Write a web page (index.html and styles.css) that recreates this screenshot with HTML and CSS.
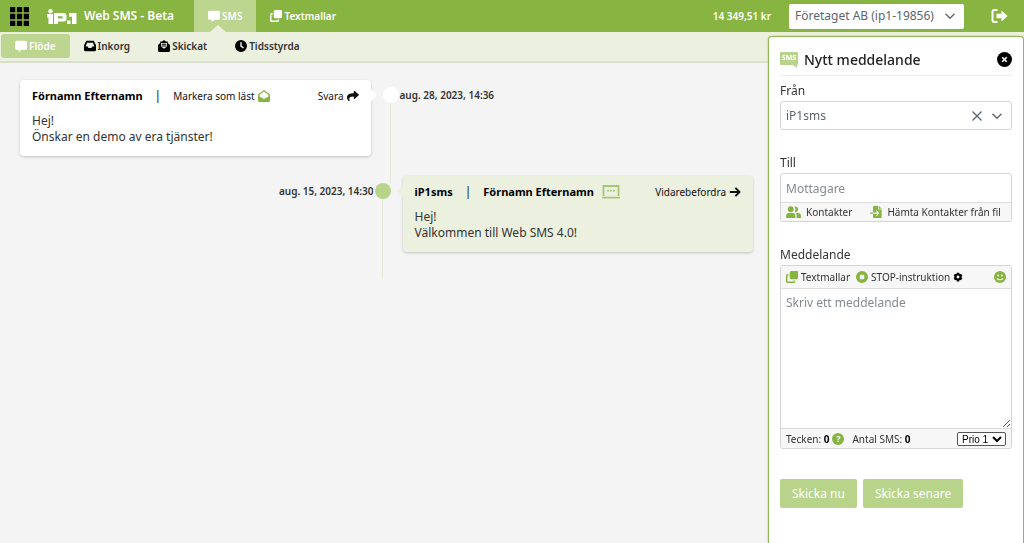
FILE: index.html
```html
<!DOCTYPE html>
<html lang="sv">
<head>
    <meta charset="UTF-8">
    <meta name="viewport" content="width=device-width, initial-scale=1.0">
    <title>Web SMS - Beta</title>
    <link rel="stylesheet" href="styles.css">
</head>
<body>
    <!-- shared icons -->
    <svg class="sprite" aria-hidden="true">
        <symbol id="i-comment" viewBox="0 0 16 16"><path d="M2 1h12a2 2 0 0 1 2 2v8a2 2 0 0 1-2 2H9l-4 3v-3H2a2 2 0 0 1-2-2V3a2 2 0 0 1 2-2z"/></symbol>
        <symbol id="i-clone" viewBox="0 0 16 16"><path d="M7 0h7.500A1.500 1.500 0 0 1 16 1.500V9a2 2 0 0 1-2 2H7a2 2 0 0 1-2-2V2a2 2 0 0 1 2-2z"/><path d="M3.500 5H2.500A1.500 1.500 0 0 0 1 6.500v7A1.500 1.500 0 0 0 2.500 15h7a1.500 1.500 0 0 0 1.500-1.500v-1" fill="none" stroke="currentColor" stroke-width="2"/></symbol>
        <symbol id="i-inbox" viewBox="0 0 16 16"><path fill-rule="evenodd" d="M3 1h10l3 6v6a2 2 0 0 1-2 2H2a2 2 0 0 1-2-2V7zM4 3.500L2.200 8.500H5l1 2h4l1-2h2.800L12 3.500z"/></symbol>
        <symbol id="i-sent" viewBox="0 0 16 16"><path fill-rule="evenodd" d="M8 0l2.500 2H13v2l3 2.500V14a2 2 0 0 1-2 2H2a2 2 0 0 1-2-2V6.500L3 4V2h2.500zM4 4v4.500l4 3 4-3V4zM5 5h6v1.200H5zM5 7.300h6v1.200H5z"/></symbol>
        <symbol id="i-clock" viewBox="0 0 16 16"><path fill-rule="evenodd" d="M8 0a8 8 0 1 1 0 16A8 8 0 0 1 8 0zM7 3v5.600l3.700 2.700 1.200-1.600L9 7.600V3z"/></symbol>
        <symbol id="i-open" viewBox="0 0 16 16"><path fill-rule="evenodd" d="M8 0l7.200 5.200a2 2 0 0 1 .8 1.600V14a2 2 0 0 1-2 2H2a2 2 0 0 1-2-2V6.800a2 2 0 0 1 .8-1.600zM8 2L2 6.500v2L8 12l6-3.500v-2z"/></symbol>
        <symbol id="i-share" viewBox="0 0 512 512"><path d="M503.691 189.836L327.687 37.851C312.281 24.546 288 35.347 288 56.015v80.053C127.371 137.907 0 170.100 0 322.326c0 61.441 39.581 122.309 83.333 154.132 13.653 9.931 33.111-2.533 28.077-18.631C66.066 312.814 132.917 274.316 288 272.085V360c0 20.700 24.300 31.453 39.687 18.164l176.004-152c11.071-9.562 11.086-26.753 0-36.328z"/></symbol>
        <symbol id="i-arrow" viewBox="0 0 16 16"><path d="M1 8h13M8.500 2.500L14 8l-5.500 5.500" fill="none" stroke="currentColor" stroke-width="2.600"/></symbol>
        <symbol id="i-chevron" viewBox="0 0 16 16"><path d="M2 5l6 6 6-6" fill="none" stroke="currentColor" stroke-width="1.800"/></symbol>
        <symbol id="i-cross" viewBox="0 0 16 16"><path d="M2 2l12 12M14 2L2 14" fill="none" stroke="currentColor" stroke-width="1.800"/></symbol>
        <symbol id="i-close" viewBox="0 0 16 16"><circle cx="8" cy="8" r="8"/><path d="M5.600 5.600l4.800 4.800M10.400 5.600l-4.800 4.800" stroke="#fff" stroke-width="1.800"/></symbol>
        <symbol id="i-laptop" viewBox="0 0 18 14"><path d="M1.500 11V1h15v10M0 12.700h18" fill="none" stroke="currentColor" stroke-width="1.800"/><path d="M5 5h2v1.500H5zM8 5h2v1.500H8zM11 5h2v1.500h-2z"/></symbol>
        <symbol id="i-users" viewBox="0 0 16 13"><circle cx="5" cy="3.500" r="3.200"/><path d="M0 13v-2.500a3 3 0 0 1 3-3h4a3 3 0 0 1 3 3V13z"/><path d="M9 .7a3 3 0 1 1 0 5.600 4.500 4.500 0 0 0 0-5.600zM10.500 7.500H13a3 3 0 0 1 3 3V13h-4.700v-2.500a4 4 0 0 0-.8-3z"/></symbol>
        <symbol id="i-import" viewBox="0 0 16 16"><path d="M5 0h6v4.500h4.500V15a1 1 0 0 1-1 1H5a1 1 0 0 1-1-1V1a1 1 0 0 1 1-1zM12 0l3.500 3.500H12z"/><path d="M4 9.500h7M8.500 6l3 3.500-3 3.500" fill="none" stroke="#f7f7f7" stroke-width="1.500"/><path d="M0 8.700h4v1.600H0z"/></symbol>
        <symbol id="i-stop" viewBox="0 0 16 16"><path fill-rule="evenodd" d="M8 0a8 8 0 1 1 0 16A8 8 0 0 1 8 0zM6 5a1 1 0 0 0-1 1v4a1 1 0 0 0 1 1h4a1 1 0 0 0 1-1V6a1 1 0 0 0-1-1z"/></symbol>
        <symbol id="i-gear" viewBox="0 0 16 16"><path d="M8 4.600V1M8 11.400V15M5 6.300L2 4.500M11 9.700l3 1.800M5 9.700l-3 1.800M11 6.300l3-1.800" stroke="currentColor" stroke-width="4"/><circle cx="8" cy="8" r="4" fill="none" stroke="currentColor" stroke-width="3.400"/></symbol>
        <symbol id="i-smile" viewBox="0 0 16 16"><circle cx="8" cy="8" r="8"/><circle cx="5.300" cy="6" r="1.200" fill="#fff"/><circle cx="10.700" cy="6" r="1.200" fill="#fff"/><path d="M4 9.800c2 2.600 6 2.600 8 0" fill="none" stroke="#fff" stroke-width="1.400"/></symbol>
    </svg>

    <header class="topbar">
        <button class="icon-button apps" type="button" aria-label="Appar">
            <svg class="apps-icon" viewBox="0 0 18 18">
                <path d="M0 0h5v5H0zM6.500 0h5v5h-5zM13 0h5v5h-5zM0 6.500h5v5H0zM6.500 6.500h5v5h-5zM13 6.500h5v5h-5zM0 13h5v5H0zM6.500 13h5v5h-5zM13 13h5v5h-5z"/>
            </svg>
        </button>
        <a class="brand" href="#">
            <svg class="logo" viewBox="0 0 30 15" aria-label="iP.1">
                <circle cx="3.500" cy="2.200" r="2.200"/>
                <path d="M0 5h6v10H1.500V8.500H0z"/>
                <path fill-rule="evenodd" d="M7 4h9.500a3 3 0 0 1 3 3v2.500a3 3 0 0 1-3 3H11V15H7zM11 7.300v2.200h4.500V7.300z"/>
                <path d="M20 11.500h3.500V15H20zM22 4h7.500v11h-4.500V7.700h-3z"/>
            </svg>
            <span>Web SMS - Beta</span>
        </a>
        <nav class="tabs">
            <a class="tab active" href="#"><svg class="icon"><use href="#i-comment"/></svg>SMS</a>
            <a class="tab" href="#"><svg class="icon"><use href="#i-clone"/></svg>Textmallar</a>
        </nav>
        <span class="balance">14 349,51 kr</span>
        <div class="account">
            <select aria-label="Konto"><option>Företaget AB (ip1-19856)</option></select>
            <svg class="icon chevron"><use href="#i-chevron"/></svg>
        </div>
        <button class="icon-button logout" type="button" aria-label="Logga ut">
            <svg class="logout-icon" viewBox="0 0 16 14">
                <path d="M6 1H3a2 2 0 0 0-2 2v8a2 2 0 0 0 2 2h3" fill="none" stroke="currentColor" stroke-width="2"/>
                <path d="M10 1.500L16 7l-6 5.500V9.200H5V4.800h5z"/>
            </svg>
        </button>
    </header>

    <nav class="subnav">
        <a class="sub active" href="#"><svg class="icon"><use href="#i-comment"/></svg>Flöde</a>
        <a class="sub" href="#"><svg class="icon"><use href="#i-inbox"/></svg>Inkorg</a>
        <a class="sub" href="#"><svg class="icon"><use href="#i-sent"/></svg>Skickat</a>
        <a class="sub" href="#"><svg class="icon"><use href="#i-clock"/></svg>Tidsstyrda</a>
    </nav>

    <main class="timeline">
        <article class="entry incoming">
            <div class="card">
                <div class="card-head">
                    <strong>Förnamn Efternamn</strong>
                    <span>|</span>
                    <button class="text-button" type="button">Markera som läst <svg class="icon green"><use href="#i-open"/></svg></button>
                    <button class="text-button last" type="button">Svara <svg class="icon"><use href="#i-share"/></svg></button>
                </div>
                <p>Hej!<br>Önskar en demo av era tjänster!</p>
            </div>
            <div class="marker"><span class="dot"></span><span class="line"></span></div>
            <time datetime="2023-08-28T14:36">aug. 28, 2023, 14:36</time>
        </article>
        <article class="entry outgoing">
            <div class="card">
                <div class="card-head">
                    <strong>iP1sms</strong>
                    <span>|</span>
                    <strong>Förnamn Efternamn</strong>
                    <svg class="laptop"><use href="#i-laptop"/></svg>
                    <button class="text-button last" type="button">Vidarebefordra <svg class="icon"><use href="#i-arrow"/></svg></button>
                </div>
                <p>Hej!<br>Välkommen till Web SMS 4.0!</p>
            </div>
            <div class="marker"><span class="dot"></span><span class="line"></span></div>
            <time datetime="2023-08-15T14:30">aug. 15, 2023, 14:30</time>
        </article>
    </main>

    <aside class="panel">
        <div class="panel-head">
            <svg class="sms-icon" viewBox="0 0 18 16">
                <path d="M1 0h16a1 1 0 0 1 1 1v11a1 1 0 0 1-1 1v3l-4-3H1a1 1 0 0 1-1-1V1a1 1 0 0 1 1-1z"/>
                <text x="9" y="8">SMS</text>
            </svg>
            <h2>Nytt meddelande</h2>
            <button class="icon-button close" type="button" aria-label="Stäng"><svg><use href="#i-close"/></svg></button>
        </div>
        <form>
            <div class="group">
                <label for="from">Från</label>
                <div class="box from">
                    <select id="from"><option>iP1sms</option></select>
                    <button class="icon-button" type="button" aria-label="Rensa"><svg class="icon"><use href="#i-cross"/></svg></button>
                    <svg class="icon chevron"><use href="#i-chevron"/></svg>
                </div>
            </div>
            <div class="group">
                <label for="to">Till</label>
                <div class="box">
                    <input id="to" type="text" placeholder="Mottagare">
                    <div class="bar contacts">
                        <button class="text-button" type="button"><svg class="users green"><use href="#i-users"/></svg>Kontakter</button>
                        <button class="text-button" type="button"><svg class="icon green"><use href="#i-import"/></svg>Hämta Kontakter från fil</button>
                    </div>
                </div>
            </div>
            <div class="group">
                <label for="message">Meddelande</label>
                <div class="box">
                    <div class="bar tools">
                        <button class="text-button" type="button"><svg class="icon green"><use href="#i-clone"/></svg>Textmallar</button>
                        <button class="text-button" type="button"><svg class="icon green"><use href="#i-stop"/></svg>STOP-instruktion</button>
                        <button class="icon-button" type="button" aria-label="Inställningar"><svg class="gear"><use href="#i-gear"/></svg></button>
                        <button class="icon-button last" type="button" aria-label="Emoji"><svg class="icon green"><use href="#i-smile"/></svg></button>
                    </div>
                    <textarea id="message" placeholder="Skriv ett meddelande"></textarea>
                    <div class="bar count">
                        <span>Tecken: <b>0</b></span>
                        <button class="help" type="button">?</button>
                        <span>Antal SMS: <b>0</b></span>
                        <select class="prio" aria-label="Prioritet"><option>Prio 1</option></select>
                    </div>
                </div>
            </div>
            <div class="actions">
                <button type="button">Skicka nu</button>
                <button type="button">Skicka senare</button>
            </div>
        </form>
    </aside>
</body>
</html>
```
FILE: styles.css
```css
* {
    margin: 0;
    padding: 0;
    box-sizing: border-box;
}

body {
    font-family: 'Noto Sans', 'Open Sans', sans-serif;
    font-size: 12px;
    line-height: 16px;
    color: #333;
    background: #f4f4f4;
}

button, select, input, textarea {
    font: inherit;
    color: inherit;
    border: none;
    background: none;
}

button {
    cursor: pointer;
}

a {
    color: inherit;
    text-decoration: none;
}

svg {
    display: block;
    flex: none;
    fill: currentColor;
}

.sprite {
    position: absolute;
    width: 0;
    height: 0;
}

.icon {
    width: 12px;
    height: 12px;
}

.green {
    color: #86b440;
}

.icon-button {
    display: flex;
}

/* Top bar */
.topbar {
    display: flex;
    align-items: center;
    height: 32px;
    padding: 0 16px 0 10px;
    background: #88b541;
    color: #fff;
    font-weight: 600;
}

.apps {
    color: #000;
}

.apps-icon {
    width: 19px;
    height: 19px;
}

.brand {
    display: flex;
    align-items: center;
    gap: 7px;
    margin: 0 20px 0 18px;
}

.logo {
    width: 30px;
    height: 15px;
}

.tabs {
    display: flex;
    align-self: stretch;
    flex: 1;
    font-size: 10px;
}

.tab {
    display: flex;
    align-items: center;
    gap: 2px;
    padding: 0 14px;
}

.tab.active {
    position: relative;
    background: #bcd690;
}

.tab.active::after {
    content: "";
    position: absolute;
    bottom: 0;
    left: 16px;
    border: 8px solid transparent;
    border-top: none;
    border-bottom: 7px solid #ebf0df;
}

.balance {
    font-size: 10px;
    margin-right: 18px;
}

.account {
    display: flex;
    align-items: center;
    width: 175px;
    height: 25px;
    padding: 0 8px 0 6px;
    border-radius: 2px;
    background: #fff;
    color: #5c6670;
    font-weight: 400;
}

.account select,
.from select {
    flex: 1;
    min-width: 0;
    appearance: none;
}

.chevron {
    color: #666;
}

.logout {
    margin-left: 27px;
}

.logout-icon {
    width: 17px;
    height: 14px;
}

/* Second row of tabs */
.subnav {
    display: flex;
    height: 31px;
    padding: 2px 0 0 1px;
    background: #ebf0df;
    border-bottom: 2px solid #dadfd0;
    font-size: 10px;
    font-weight: 600;
}

.sub {
    display: flex;
    align-items: center;
    gap: 2px;
    height: 24px;
    padding: 0 14px;
}

.sub .icon {
    color: #000;
}

.sub.active,
.sub.active .icon {
    color: #fff;
}

.sub.active {
    border-radius: 3px;
    background: #bcd690;
}

/* Message flow */
.timeline {
    margin-right: 25%;
    padding: 17px 15px 20px 20px;
}

.entry {
    display: flex;
}

.outgoing {
    flex-direction: row-reverse;
}

.card {
    position: relative;
    width: calc(50% - 16px);
    margin-bottom: 20px;
    padding: 8px 12px 11px;
    border-radius: 4px;
    background: #fff;
    box-shadow: 0 1px 3px rgba(0, 0, 0, 0.2);
}

.card::after {
    content: "";
    position: absolute;
    top: 9px;
    left: 100%;
    border: 6px solid transparent;
    border-right: none;
    border-left-color: #fff;
}

.outgoing .card {
    background: #ebf0df;
}

.outgoing .card::after {
    left: auto;
    right: 100%;
    border: 6px solid transparent;
    border-left: none;
    border-right-color: #ebf0df;
}

.card-head {
    display: flex;
    align-items: center;
    gap: 12px;
    margin-bottom: 9px;
    color: #111;
}

.card-head strong {
    font-size: 11px;
    color: #000;
}

.text-button {
    display: flex;
    align-items: center;
    gap: 3px;
    font-size: 10px;
    white-space: nowrap;
}

.last {
    margin-left: auto;
}

.laptop {
    width: 18px;
    height: 14px;
    margin-left: -4px;
    color: #a5c877;
}

.marker {
    display: flex;
    flex-direction: column;
    align-items: center;
    margin: 0 1px 0 12px;
    padding-top: 7px;
}

.outgoing .marker {
    margin: 0 12px 0 1px;
}

.dot {
    width: 16px;
    height: 16px;
    border-radius: 50%;
    background: #fff;
}

.outgoing .dot {
    background: #b8d48b;
}

.line {
    flex: 1;
    width: 1px;
    margin-bottom: -7px;
    background: #e4ead6;
}

.entry time {
    flex: 1;
    padding-top: 7px;
    font-size: 10px;
    font-weight: 600;
}

.outgoing time {
    text-align: right;
}

/* New message */
.panel {
    position: fixed;
    top: 36px;
    right: 0;
    bottom: 0;
    width: 25%;
    padding: 11px;
    overflow: auto;
    border: 1px solid #8fb855;
    border-bottom: none;
    border-radius: 4px 4px 0 0;
    background: #fff;
    box-shadow: 0 0 2px #a5c574;
}

.panel-head {
    display: flex;
    align-items: center;
    gap: 6px;
    height: 28px;
    padding-bottom: 4px;
    margin-bottom: 7px;
    border-bottom: 1px solid #eee;
}

.panel-head h2 {
    font-size: 14px;
    font-weight: 500;
    color: #222;
}

.sms-icon {
    width: 18px;
    height: 16px;
    color: #b8d48b;
}

.sms-icon text {
    font-size: 7px;
    font-weight: 800;
    text-anchor: middle;
    fill: #fff;
}

.close {
    margin-left: auto;
    color: #000;
}

.close svg {
    width: 15px;
    height: 15px;
}

.group {
    margin-bottom: 25px;
}

.group label {
    display: block;
    margin-bottom: 2px;
}

.box {
    border: 1px solid #d4d4d4;
    border-radius: 3px;
    overflow: hidden;
}

.from {
    display: flex;
    align-items: center;
    gap: 8px;
    height: 29px;
    padding: 0 8px 0 5px;
    color: #5c6670;
}

.box input {
    display: block;
    width: 100%;
    height: 28px;
    padding: 0 5px;
}

.box textarea {
    display: block;
    width: 100%;
    height: 139px;
    padding: 6px 5px;
    resize: vertical;
}

.box ::placeholder {
    color: #858b91;
}

.bar {
    display: flex;
    align-items: center;
    padding: 0 5px;
    background: #f7f7f7;
    font-size: 10px;
}

.contacts {
    gap: 18px;
    height: 19px;
    border-top: 1px solid #ddd;
}

.contacts .text-button {
    gap: 5px;
}

.users {
    width: 15px;
    height: 12px;
}

.tools {
    gap: 6px;
    height: 23px;
    border-bottom: 1px solid #ddd;
}

.tools .icon-button:not(.last) {
    margin-left: -3px;
}

.gear {
    width: 10px;
    height: 10px;
    color: #000;
}

.count {
    height: 20px;
    border-top: 1px solid #ddd;
}

.count b {
    color: #000;
}

.help {
    width: 12px;
    height: 12px;
    margin: 0 8px 0 3px;
    border-radius: 50%;
    background: #86b440;
    color: #fff;
    font-size: 9px;
    font-weight: 700;
    line-height: 12px;
}

.prio {
    height: 14px;
    margin-left: auto;
    border: 1px solid #555;
    border-radius: 2px;
    background: #fff;
    color: #000;
    font-family: 'Liberation Sans', sans-serif;
    line-height: 12px;
}

.actions {
    display: flex;
    gap: 6px;
    margin-top: 30px;
}

.actions button {
    height: 29px;
    padding: 0 12px;
    border-radius: 2px;
    background: #b8d48b;
    color: #fff;
}
```
